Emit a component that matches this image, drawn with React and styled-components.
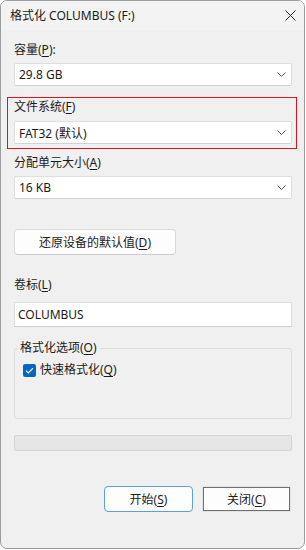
import React from "react";
import styled, { createGlobalStyle } from "styled-components";

const Global = createGlobalStyle`
    html, body {
        margin: 0;
        padding: 0;
        background: #ffffff;
    }
    body {
        font-family: "Noto Sans", "Noto Sans CJK SC", sans-serif;
        font-size: 12px;
        color: #1b1b1b;
    }
`;

const Window = styled.div`
    box-sizing: border-box;
    width: 305px;
    height: 549px;
    border: 1px solid #9c9c9c;
    border-radius: 7px;
    background: #f0f0f0;
    overflow: hidden;
    display: flex;
    flex-direction: column;
`;

const TitleBar = styled.div`
    height: 29px;
    flex: none;
    background: #f3f3f3;
    display: flex;
    align-items: center;
    justify-content: space-between;
    padding: 0 6px 0 9px;
`;

const Title = styled.span`
    font-size: 12px;
    line-height: 16px;
`;

const CloseX = styled.button`
    width: 16px;
    height: 16px;
    border: none;
    background: none;
    padding: 0;
    display: flex;
    align-items: center;
    justify-content: center;
    color: #222;
`;

const Body = styled.div`
    display: flex;
    flex-direction: column;
    padding: 12px 12px 0 13px;
`;

const Label = styled.div`
    line-height: 16px;
    margin-top: ${p => p.$top || 0}px;
    white-space: nowrap;
`;

const Key = styled.span`
    text-decoration: underline;
    text-underline-offset: 2px;
`;

const Combo = styled.div`
    box-sizing: border-box;
    height: ${p => p.$h || 23}px;
    margin-top: ${p => p.$top || 0}px;
    background: #ffffff;
    border: 1px solid #dedede;
    border-bottom-color: #d2d2d2;
    border-radius: 2px;
    display: flex;
    align-items: center;
    justify-content: space-between;
    padding: 0 5px 0 4px;
`;

const Highlight = styled.div`
    display: flex;
    flex-direction: column;
    margin: 11px -5px 0 -7px;
    padding: 1px 4px 4px 6px;
    border: 1px solid #e0141b;
`;

const PlainButton = styled.button`
    box-sizing: border-box;
    align-self: flex-start;
    width: 162px;
    height: 26px;
    margin-top: 30px;
    font: inherit;
    color: inherit;
    background: #fdfdfd;
    border: 1px solid #d9d9d9;
    border-bottom-color: #cccccc;
    border-radius: 4px;
`;

const TextBox = styled.div`
    box-sizing: border-box;
    height: 25px;
    margin-top: 9px;
    background: #ffffff;
    border: 1px solid #dedede;
    border-bottom-color: #cfcfcf;
    display: flex;
    align-items: center;
    padding: 0 3px;
`;

const Group = styled.fieldset`
    box-sizing: border-box;
    margin: 13px 0 0;
    padding: 6px 8px 0 8px;
    height: 79px;
    border: 1px solid #dcdcdc;
    border-radius: 3px;
`;

const Legend = styled.legend`
    padding: 0 3px 0 2px;
    margin-left: -5px;
    line-height: 16px;
`;

const CheckRow = styled.label`
    display: flex;
    align-items: center;
    gap: 4px;
    line-height: 16px;
`;

const Progress = styled.div`
    box-sizing: border-box;
    height: 16px;
    margin-top: 16px;
    background: #e6e6e6;
    border: 1px solid #d4d4d4;
    border-radius: 2px;
`;

const Actions = styled.div`
    display: flex;
    justify-content: flex-end;
    gap: 10px;
    margin-top: 35px;
    padding-right: 2px;
`;

const DialogButton = styled.button`
    box-sizing: border-box;
    font: inherit;
    color: inherit;
    background: #fdfdfd;
    width: ${p => p.$w}px;
    height: ${p => (p.$primary ? 26 : 24)}px;
    margin-top: ${p => (p.$primary ? 0 : 1)}px;
    border: 1px solid ${p => (p.$primary ? "#5b9fe3" : "#6f6f6f")};
    border-radius: ${p => (p.$primary ? 4 : 0)}px;
    box-shadow: ${p => (p.$primary ? "none" : "0 0 0 1px #e2e2e2")};
    padding: 0;
`;

const Chevron = () => (
    <svg width="9" height="5" viewBox="0 0 9 5">
        <path d="M0.5 0.5 L4.5 4.5 L8.5 0.5" fill="none" stroke="#555" strokeWidth="1" />
    </svg>
);

const Check = () => (
    <svg width="13" height="13" viewBox="0 0 13 13">
        <rect x="0" y="0" width="13" height="13" rx="2" fill="#0a65c2" />
        <path d="M3 6.6 L5.4 9 L10 4.2" fill="none" stroke="#ffffff" strokeWidth="1.2" />
    </svg>
);

function Select({ value, top }) {
    return (
        <Combo $top={top}>
            <span>{value}</span>
            <Chevron />
        </Combo>
    );
}

function App() {
    return (
        <>
            <Global />
            <Window>
                <TitleBar>
                    <Title>格式化 COLUMBUS (F:)</Title>
                    <CloseX aria-label="关闭">
                        <svg width="11" height="11" viewBox="0 0 11 11">
                            <path d="M0.5 0.5 L10.5 10.5 M10.5 0.5 L0.5 10.5" stroke="#222" strokeWidth="1" />
                        </svg>
                    </CloseX>
                </TitleBar>

                <Body>
                    <Label>容量(<Key>P</Key>):</Label>
                    <Select value="29.8 GB" top={5} />

                    <Highlight>
                        <Label>文件系统(<Key>F</Key>)</Label>
                        <Select value="FAT32 (默认)" top={6} />
                    </Highlight>

                    <Label $top={6}>分配单元大小(<Key>A</Key>)</Label>
                    <Select value="16 KB" top={5} />

                    <PlainButton>还原设备的默认值(<Key>D</Key>)</PlainButton>

                    <Label $top={22}>卷标(<Key>L</Key>)</Label>
                    <TextBox>COLUMBUS</TextBox>

                    <Group>
                        <Legend>格式化选项(<Key>O</Key>)</Legend>
                        <CheckRow>
                            <Check />
                            <span>快速格式化(<Key>Q</Key>)</span>
                        </CheckRow>
                    </Group>

                    <Progress />

                    <Actions>
                        <DialogButton $primary $w={89}>开始(<Key>S</Key>)</DialogButton>
                        <DialogButton $w={87}>关闭(<Key>C</Key>)</DialogButton>
                    </Actions>
                </Body>
            </Window>
        </>
    );
}

export default App;
